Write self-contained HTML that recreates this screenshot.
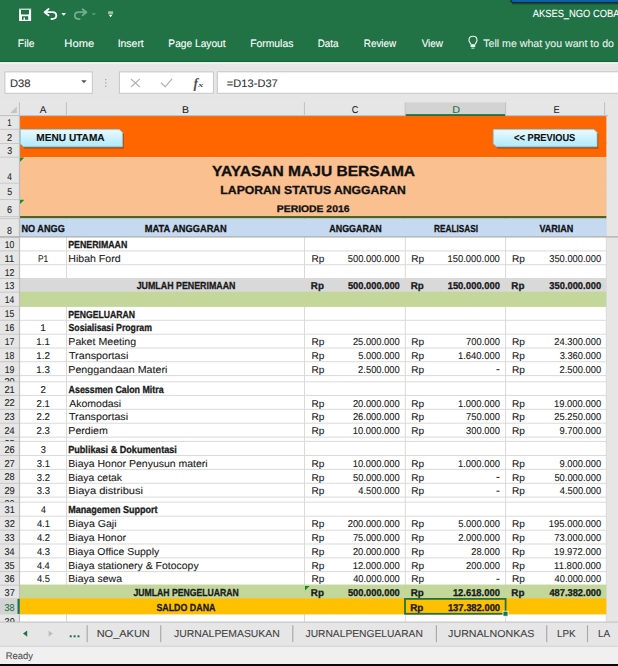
<!DOCTYPE html>
<html><head><meta charset="utf-8"><style>
html,body{margin:0;padding:0;width:618px;height:666px;overflow:hidden;background:#fff}
text{white-space:pre;text-rendering:geometricPrecision}
</style></head><body>
<svg width="618" height="666" viewBox="0 0 618 666" style="display:block">
<defs>
<linearGradient id="btn" x1="0" y1="0" x2="0" y2="1"><stop offset="0" stop-color="#ebfaff"/><stop offset="1" stop-color="#aee9fa"/></linearGradient>
<linearGradient id="shd" x1="0" y1="0" x2="0" y2="1"><stop offset="0" stop-color="#000" stop-opacity="0.55"/><stop offset="1" stop-color="#000" stop-opacity="0"/></linearGradient>
</defs>
<rect x="0" y="0" width="618" height="62" fill="#217346" />
<rect x="512" y="2.6" width="110" height="2.6" fill="url(#shd)" />
<rect x="510.4" y="-8" width="120" height="11" fill="#0b1a10"  rx="3"/>
<rect x="511.2" y="-8" width="118" height="10.2" fill="#0d5fa8"  rx="2.5"/>
<path fill-rule="evenodd" fill="#fff" d="M19.1 8.8 H31.1 V20.9 H19.1 Z M21.0 9.9 H29.0 V13.8 Q29.0 14.6 28.2 14.6 H21.8 Q21.0 14.6 21.0 13.8 Z M22.0 16.3 H28.2 V19.7 H25.0 V17.6 H23.6 V19.7 H22.0 Z"/>
<rect x="19.1" y="8.8" width="12.0" height="1.1" fill="#b9d5c4" />
<path d="M44.6 12.2 L48.6 9.0 M44.6 12.2 L48.6 15.4 M44.6 12.2 H52.6 C55.0 12.2 56.3 14.0 56.3 15.8 C56.3 17.6 54.6 19.0 51.4 19.0" fill="none" stroke="#fff" stroke-width="1.8" stroke-linecap="round" stroke-linejoin="round"/>
<path d="M61.3 13.1 H66.1 L63.7 15.8 Z" fill="#fff"/>
<path d="M86.4 12.2 L82.6 9.2 M86.4 12.2 L82.6 15.2 M86.4 12.2 H78.6 C76.0 12.2 74.8 14.0 74.8 15.6 C74.8 17.6 76.6 19.2 79.6 19.2" fill="none" stroke="#6fae8c" stroke-width="1.8" stroke-linecap="round" stroke-linejoin="round"/>
<path d="M91.6 13.2 H96.1 L93.85 15.2 Z" fill="#5f9f7d"/>
<rect x="108.1" y="11.6" width="5.0" height="1.0" fill="#fff" />
<path d="M107.9 13.6 H113.3 L110.6 17.3 Z" fill="#fff"/>
<rect x="108.1" y="14.2" width="5.0" height="0.7" fill="#217346" />
<text x="532.68" y="17.10" font-family='"Liberation Sans", sans-serif' font-size="10.47" font-weight="normal" font-style="normal" fill="#ffffff" stroke="#ffffff" stroke-width="0.1" textLength="86.83" lengthAdjust="spacingAndGlyphs" >AKSES_NGO COBA</text>
<text x="17.85" y="46.70" font-family='"Liberation Sans", sans-serif' font-size="10.76" font-weight="normal" font-style="normal" fill="#ffffff" stroke="#ffffff" stroke-width="0.1" textLength="16.60" lengthAdjust="spacingAndGlyphs" >File</text>
<text x="64.38" y="46.70" font-family='"Liberation Sans", sans-serif' font-size="10.76" font-weight="normal" font-style="normal" fill="#ffffff" stroke="#ffffff" stroke-width="0.1" textLength="29.80" lengthAdjust="spacingAndGlyphs" >Home</text>
<text x="117.63" y="46.70" font-family='"Liberation Sans", sans-serif' font-size="10.76" font-weight="normal" font-style="normal" fill="#ffffff" stroke="#ffffff" stroke-width="0.1" textLength="26.16" lengthAdjust="spacingAndGlyphs" >Insert</text>
<text x="168.36" y="46.70" font-family='"Liberation Sans", sans-serif' font-size="10.76" font-weight="normal" font-style="normal" fill="#ffffff" stroke="#ffffff" stroke-width="0.1" textLength="57.23" lengthAdjust="spacingAndGlyphs" >Page Layout</text>
<text x="250.14" y="46.70" font-family='"Liberation Sans", sans-serif' font-size="10.76" font-weight="normal" font-style="normal" fill="#ffffff" stroke="#ffffff" stroke-width="0.1" textLength="43.22" lengthAdjust="spacingAndGlyphs" >Formulas</text>
<text x="317.68" y="46.70" font-family='"Liberation Sans", sans-serif' font-size="10.76" font-weight="normal" font-style="normal" fill="#ffffff" stroke="#ffffff" stroke-width="0.1" textLength="20.92" lengthAdjust="spacingAndGlyphs" >Data</text>
<text x="363.79" y="46.70" font-family='"Liberation Sans", sans-serif' font-size="10.76" font-weight="normal" font-style="normal" fill="#ffffff" stroke="#ffffff" stroke-width="0.1" textLength="32.38" lengthAdjust="spacingAndGlyphs" >Review</text>
<text x="421.65" y="46.70" font-family='"Liberation Sans", sans-serif' font-size="10.76" font-weight="normal" font-style="normal" fill="#ffffff" stroke="#ffffff" stroke-width="0.1" textLength="21.32" lengthAdjust="spacingAndGlyphs" >View</text>
<text x="483.26" y="46.70" font-family='"Liberation Sans", sans-serif' font-size="10.76" font-weight="normal" font-style="normal" fill="#e8f1ec" stroke="#e8f1ec" stroke-width="0.1" textLength="130.67" lengthAdjust="spacingAndGlyphs" >Tell me what you want to do</text>
<path d="M470.9 44.4 C470.5 43.0 469.0 42.2 469.0 40.2 C469.0 37.9 470.8 36.3 473.0 36.3 C475.2 36.3 477.0 37.9 477.0 40.2 C477.0 42.2 475.5 43.0 475.1 44.4" fill="none" stroke="#eef5f0" stroke-width="1.1"/>
<rect x="470.6" y="44.2" width="4.6" height="2.8" fill="#eef5f0" />
<rect x="471.4" y="47.7" width="3.0" height="0.9" fill="#eef5f0" />
<rect x="0" y="62" width="618" height="40" fill="#e6e6e6" />
<rect x="0" y="60.6" width="618" height="1.3" fill="#146b38" />
<rect x="0" y="62.8" width="618" height="1.3" fill="#f3eff3" />
<rect x="4.9" y="71.9" width="87.4" height="21.4" fill="#fff" stroke="#c6c6c6" stroke-width="1"/>
<text x="9.97" y="86.70" font-family='"Liberation Sans", sans-serif' font-size="10.91" font-weight="normal" font-style="normal" fill="#333" stroke="#333" stroke-width="0.1" textLength="20.63" lengthAdjust="spacingAndGlyphs" >D38</text>
<path d="M81.2 80.2 H86.6 L83.9 83.2 Z" fill="#555"/>
<rect x="105.2" y="79.0" width="1.2" height="1.2" fill="#9a9a9a" />
<rect x="105.2" y="82.3" width="1.2" height="1.2" fill="#9a9a9a" />
<rect x="105.2" y="85.6" width="1.2" height="1.2" fill="#9a9a9a" />
<rect x="119.4" y="71.9" width="94" height="21.4" fill="#fff" stroke="#c6c6c6" stroke-width="1"/>
<path d="M131 79.0 L139.8 87.0 M139.8 79.0 L131 87.0" stroke="#b4b4b4" stroke-width="1.1"/>
<path d="M161.0 82.8 L165.2 86.8 L172.2 78.6" fill="none" stroke="#b4b4b4" stroke-width="1.3"/>
<text x="193.40" y="87.60" font-family='"Liberation Serif", serif' font-size="14.25" font-weight="bold" font-style="italic" fill="#505050" textLength="4.49" lengthAdjust="spacingAndGlyphs" >f</text>
<text x="197.94" y="86.60" font-family='"Liberation Serif", serif' font-size="6.40" font-weight="bold" font-style="italic" fill="#505050" textLength="5.44" lengthAdjust="spacingAndGlyphs" >x</text>
<rect x="217.3" y="71.8" width="410" height="21.5" fill="#fff" stroke="#c6c6c6" stroke-width="1"/>
<text x="226.87" y="86.80" font-family='"Liberation Sans", sans-serif' font-size="10.91" font-weight="normal" font-style="normal" fill="#333" stroke="#333" stroke-width="0.1" textLength="50.89" lengthAdjust="spacingAndGlyphs" >=D13-D37</text>
<rect x="0" y="102.3" width="618" height="519.7" fill="#e6e6e6" />
<rect x="19.5" y="115.3" width="586.8" height="506.7" fill="#ffffff" />
<rect x="606.3" y="115.3" width="2" height="506.7" fill="#e3e7ea" />
<rect x="19.5" y="250.40" width="586.8" height="1" fill="#dadada"/>
<rect x="19.5" y="264.20" width="586.8" height="1" fill="#dadada"/>
<rect x="19.5" y="278.00" width="586.8" height="1" fill="#dadada"/>
<rect x="19.5" y="291.70" width="586.8" height="1" fill="#dadada"/>
<rect x="19.5" y="305.80" width="586.8" height="1" fill="#dadada"/>
<rect x="19.5" y="319.80" width="586.8" height="1" fill="#dadada"/>
<rect x="19.5" y="333.70" width="586.8" height="1" fill="#dadada"/>
<rect x="19.5" y="347.50" width="586.8" height="1" fill="#dadada"/>
<rect x="19.5" y="361.20" width="586.8" height="1" fill="#dadada"/>
<rect x="19.5" y="375.10" width="586.8" height="1" fill="#dadada"/>
<rect x="19.5" y="381.30" width="586.8" height="1" fill="#dadada"/>
<rect x="19.5" y="394.90" width="586.8" height="1" fill="#dadada"/>
<rect x="19.5" y="408.80" width="586.8" height="1" fill="#dadada"/>
<rect x="19.5" y="422.70" width="586.8" height="1" fill="#dadada"/>
<rect x="19.5" y="436.60" width="586.8" height="1" fill="#dadada"/>
<rect x="19.5" y="440.90" width="586.8" height="1" fill="#dadada"/>
<rect x="19.5" y="455.00" width="586.8" height="1" fill="#dadada"/>
<rect x="19.5" y="468.90" width="586.8" height="1" fill="#dadada"/>
<rect x="19.5" y="482.80" width="586.8" height="1" fill="#dadada"/>
<rect x="19.5" y="496.60" width="586.8" height="1" fill="#dadada"/>
<rect x="19.5" y="501.70" width="586.8" height="1" fill="#dadada"/>
<rect x="19.5" y="515.70" width="586.8" height="1" fill="#dadada"/>
<rect x="19.5" y="529.70" width="586.8" height="1" fill="#dadada"/>
<rect x="19.5" y="543.50" width="586.8" height="1" fill="#dadada"/>
<rect x="19.5" y="557.40" width="586.8" height="1" fill="#dadada"/>
<rect x="19.5" y="571.10" width="586.8" height="1" fill="#dadada"/>
<rect x="19.5" y="584.70" width="586.8" height="1" fill="#dadada"/>
<rect x="19.5" y="598.40" width="586.8" height="1" fill="#dadada"/>
<rect x="19.5" y="613.30" width="586.8" height="1" fill="#dadada"/>
<rect x="66.00" y="115.3" width="1" height="506.7" fill="#dadada"/>
<rect x="304.00" y="115.3" width="1" height="506.7" fill="#dadada"/>
<rect x="404.80" y="115.3" width="1" height="506.7" fill="#dadada"/>
<rect x="505.10" y="115.3" width="1" height="506.7" fill="#dadada"/>
<rect x="605.80" y="115.3" width="1" height="506.7" fill="#dadada"/>
<rect x="19.50" y="115.30" width="586.80" height="14.50" fill="#ff6600" />
<rect x="19.50" y="128.80" width="586.80" height="15.20" fill="#ff6600" />
<rect x="19.50" y="143.00" width="586.80" height="14.20" fill="#ff6600" />
<rect x="19.50" y="157.20" width="586.80" height="26.50" fill="#fac090" />
<rect x="19.50" y="182.70" width="586.80" height="17.30" fill="#fac090" />
<rect x="19.50" y="199.00" width="586.80" height="17.60" fill="#fac090" />
<rect x="19.5" y="216.0" width="586.8" height="2.4" fill="#4f6228" />
<rect x="19.50" y="218.80" width="586.80" height="18.00" fill="#c5d9f1" />
<rect x="19.50" y="278.00" width="586.80" height="14.70" fill="#d9d9d9" />
<rect x="19.50" y="291.70" width="586.80" height="15.10" fill="#c4d79b" />
<rect x="19.50" y="584.70" width="586.80" height="14.70" fill="#c4d79b" />
<rect x="19.50" y="598.40" width="586.80" height="15.90" fill="#ffc000" />
<path d="M19.8 157.5 H24.3 L19.8 162.0 Z" fill="#0e8a1c"/>
<path d="M19.8 199.8 H24.3 L19.8 204.3 Z" fill="#0e8a1c"/>
<path d="M305.0 586.0 H309.6 L305.0 590.6 Z" fill="#0e8a1c"/>
<rect x="0" y="115.3" width="19.5" height="506.7" fill="#e6e6e6" />
<rect x="0" y="128.80" width="19.5" height="1" fill="#c9c9c9"/>
<rect x="0" y="143.00" width="19.5" height="1" fill="#c9c9c9"/>
<rect x="0" y="156.70" width="19.5" height="1" fill="#c9c9c9"/>
<rect x="0" y="182.70" width="19.5" height="1" fill="#c9c9c9"/>
<rect x="0" y="199.00" width="19.5" height="1" fill="#c9c9c9"/>
<rect x="0" y="216.10" width="19.5" height="1" fill="#c9c9c9"/>
<rect x="0" y="218.10" width="19.5" height="1" fill="#c9c9c9"/>
<rect x="0" y="236.30" width="19.5" height="1" fill="#c9c9c9"/>
<rect x="0" y="237.10" width="19.5" height="1" fill="#c9c9c9"/>
<rect x="0" y="250.40" width="19.5" height="1" fill="#c9c9c9"/>
<rect x="0" y="264.20" width="19.5" height="1" fill="#c9c9c9"/>
<rect x="0" y="278.00" width="19.5" height="1" fill="#c9c9c9"/>
<rect x="0" y="291.70" width="19.5" height="1" fill="#c9c9c9"/>
<rect x="0" y="305.80" width="19.5" height="1" fill="#c9c9c9"/>
<rect x="0" y="319.80" width="19.5" height="1" fill="#c9c9c9"/>
<rect x="0" y="333.70" width="19.5" height="1" fill="#c9c9c9"/>
<rect x="0" y="347.50" width="19.5" height="1" fill="#c9c9c9"/>
<rect x="0" y="361.20" width="19.5" height="1" fill="#c9c9c9"/>
<rect x="0" y="375.10" width="19.5" height="1" fill="#c9c9c9"/>
<rect x="0" y="381.30" width="19.5" height="1" fill="#c9c9c9"/>
<rect x="0" y="394.90" width="19.5" height="1" fill="#c9c9c9"/>
<rect x="0" y="408.80" width="19.5" height="1" fill="#c9c9c9"/>
<rect x="0" y="422.70" width="19.5" height="1" fill="#c9c9c9"/>
<rect x="0" y="436.60" width="19.5" height="1" fill="#c9c9c9"/>
<rect x="0" y="440.90" width="19.5" height="1" fill="#c9c9c9"/>
<rect x="0" y="455.00" width="19.5" height="1" fill="#c9c9c9"/>
<rect x="0" y="468.90" width="19.5" height="1" fill="#c9c9c9"/>
<rect x="0" y="482.80" width="19.5" height="1" fill="#c9c9c9"/>
<rect x="0" y="496.60" width="19.5" height="1" fill="#c9c9c9"/>
<rect x="0" y="501.70" width="19.5" height="1" fill="#c9c9c9"/>
<rect x="0" y="515.70" width="19.5" height="1" fill="#c9c9c9"/>
<rect x="0" y="529.70" width="19.5" height="1" fill="#c9c9c9"/>
<rect x="0" y="543.50" width="19.5" height="1" fill="#c9c9c9"/>
<rect x="0" y="557.40" width="19.5" height="1" fill="#c9c9c9"/>
<rect x="0" y="571.10" width="19.5" height="1" fill="#c9c9c9"/>
<rect x="0" y="584.70" width="19.5" height="1" fill="#c9c9c9"/>
<rect x="0" y="598.40" width="19.5" height="1" fill="#c9c9c9"/>
<rect x="0" y="613.30" width="19.5" height="1" fill="#c9c9c9"/>
<rect x="0" y="599.40" width="18.0" height="13.90" fill="#d3d3d3" />
<rect x="17.7" y="598.90" width="2.0" height="14.90" fill="#217346" />
<rect x="18.9" y="115.3" width="1.2" height="506.7" fill="#bdbdbd" />
<rect x="17.7" y="598.90" width="2.0" height="14.90" fill="#217346" />
<rect x="0" y="102.3" width="618" height="13.0" fill="#e6e6e6" />
<rect x="405.8" y="102.3" width="99.80000000000001" height="11.8" fill="#d3d3d3" />
<rect x="405.3" y="114.1" width="100.30000000000001" height="1.9" fill="#217346" />
<rect x="18.90" y="102.3" width="1.1" height="13.0" fill="#c3c3c3"/>
<rect x="65.90" y="102.3" width="1.1" height="13.0" fill="#c3c3c3"/>
<rect x="303.90" y="102.3" width="1.1" height="13.0" fill="#c3c3c3"/>
<rect x="404.70" y="102.3" width="1.1" height="13.0" fill="#c3c3c3"/>
<rect x="505.00" y="102.3" width="1.1" height="13.0" fill="#c3c3c3"/>
<rect x="604.00" y="102.3" width="1.1" height="13.0" fill="#c3c3c3"/>
<rect x="0" y="115.0" width="405.3" height="1.1" fill="#b9c4cc" />
<rect x="505.6" y="115.0" width="102.39999999999998" height="1.1" fill="#b9c4cc" />
<path d="M10.2 113.0 L16.8 106.6 L16.8 113.0 Z" fill="#c2c2c2"/>
<text x="39.88" y="112.80" font-family='"Liberation Sans", sans-serif' font-size="9.89" font-weight="normal" font-style="normal" fill="#262626" stroke="#262626" stroke-width="0.1" textLength="6.64" lengthAdjust="spacingAndGlyphs" >A</text>
<text x="182.03" y="112.80" font-family='"Liberation Sans", sans-serif' font-size="9.89" font-weight="normal" font-style="normal" fill="#262626" stroke="#262626" stroke-width="0.1" textLength="7.01" lengthAdjust="spacingAndGlyphs" >B</text>
<text x="351.74" y="112.80" font-family='"Liberation Sans", sans-serif' font-size="9.89" font-weight="normal" font-style="normal" fill="#262626" stroke="#262626" stroke-width="0.1" textLength="6.60" lengthAdjust="spacingAndGlyphs" >C</text>
<text x="452.26" y="112.80" font-family='"Liberation Sans", sans-serif' font-size="9.89" font-weight="normal" font-style="normal" fill="#217346" stroke="#217346" stroke-width="0.1" textLength="7.80" lengthAdjust="spacingAndGlyphs" >D</text>
<text x="553.59" y="112.80" font-family='"Liberation Sans", sans-serif' font-size="9.89" font-weight="normal" font-style="normal" fill="#262626" stroke="#262626" stroke-width="0.1" textLength="6.15" lengthAdjust="spacingAndGlyphs" >E</text>
<text x="7.31" y="126.40" font-family='"Liberation Sans", sans-serif' font-size="9.89" font-weight="normal" font-style="normal" fill="#262626" stroke="#262626" stroke-width="0.1" textLength="4.37" lengthAdjust="spacingAndGlyphs" >1</text>
<text x="7.04" y="140.60" font-family='"Liberation Sans", sans-serif' font-size="9.89" font-weight="normal" font-style="normal" fill="#262626" stroke="#262626" stroke-width="0.1" textLength="5.13" lengthAdjust="spacingAndGlyphs" >2</text>
<text x="7.17" y="154.30" font-family='"Liberation Sans", sans-serif' font-size="9.89" font-weight="normal" font-style="normal" fill="#262626" stroke="#262626" stroke-width="0.1" textLength="4.92" lengthAdjust="spacingAndGlyphs" >3</text>
<text x="7.31" y="179.90" font-family='"Liberation Sans", sans-serif' font-size="9.89" font-weight="normal" font-style="normal" fill="#262626" stroke="#262626" stroke-width="0.1" textLength="4.63" lengthAdjust="spacingAndGlyphs" >4</text>
<text x="7.15" y="195.10" font-family='"Liberation Sans", sans-serif' font-size="9.89" font-weight="normal" font-style="normal" fill="#262626" stroke="#262626" stroke-width="0.1" textLength="4.92" lengthAdjust="spacingAndGlyphs" >5</text>
<text x="7.05" y="213.20" font-family='"Liberation Sans", sans-serif' font-size="9.89" font-weight="normal" font-style="normal" fill="#262626" stroke="#262626" stroke-width="0.1" textLength="5.05" lengthAdjust="spacingAndGlyphs" >6</text>
<text x="7.12" y="233.90" font-family='"Liberation Sans", sans-serif' font-size="9.89" font-weight="normal" font-style="normal" fill="#262626" stroke="#262626" stroke-width="0.1" textLength="4.97" lengthAdjust="spacingAndGlyphs" >8</text>
<text x="4.65" y="248.00" font-family='"Liberation Sans", sans-serif' font-size="9.89" font-weight="normal" font-style="normal" fill="#262626" stroke="#262626" stroke-width="0.1" textLength="9.59" lengthAdjust="spacingAndGlyphs" >10</text>
<text x="4.60" y="261.80" font-family='"Liberation Sans", sans-serif' font-size="9.89" font-weight="normal" font-style="normal" fill="#262626" stroke="#262626" stroke-width="0.1" textLength="9.76" lengthAdjust="spacingAndGlyphs" >11</text>
<text x="4.65" y="275.60" font-family='"Liberation Sans", sans-serif' font-size="9.89" font-weight="normal" font-style="normal" fill="#262626" stroke="#262626" stroke-width="0.1" textLength="9.71" lengthAdjust="spacingAndGlyphs" >12</text>
<text x="4.65" y="289.30" font-family='"Liberation Sans", sans-serif' font-size="9.89" font-weight="normal" font-style="normal" fill="#262626" stroke="#262626" stroke-width="0.1" textLength="9.64" lengthAdjust="spacingAndGlyphs" >13</text>
<text x="4.66" y="303.40" font-family='"Liberation Sans", sans-serif' font-size="9.89" font-weight="normal" font-style="normal" fill="#262626" stroke="#262626" stroke-width="0.1" textLength="9.49" lengthAdjust="spacingAndGlyphs" >14</text>
<text x="4.65" y="317.40" font-family='"Liberation Sans", sans-serif' font-size="9.89" font-weight="normal" font-style="normal" fill="#262626" stroke="#262626" stroke-width="0.1" textLength="9.61" lengthAdjust="spacingAndGlyphs" >15</text>
<text x="4.65" y="331.30" font-family='"Liberation Sans", sans-serif' font-size="9.89" font-weight="normal" font-style="normal" fill="#262626" stroke="#262626" stroke-width="0.1" textLength="9.64" lengthAdjust="spacingAndGlyphs" >16</text>
<text x="4.65" y="345.10" font-family='"Liberation Sans", sans-serif' font-size="9.89" font-weight="normal" font-style="normal" fill="#262626" stroke="#262626" stroke-width="0.1" textLength="9.71" lengthAdjust="spacingAndGlyphs" >17</text>
<text x="4.65" y="358.80" font-family='"Liberation Sans", sans-serif' font-size="9.89" font-weight="normal" font-style="normal" fill="#262626" stroke="#262626" stroke-width="0.1" textLength="9.64" lengthAdjust="spacingAndGlyphs" >18</text>
<text x="4.65" y="372.70" font-family='"Liberation Sans", sans-serif' font-size="9.89" font-weight="normal" font-style="normal" fill="#262626" stroke="#262626" stroke-width="0.1" textLength="9.66" lengthAdjust="spacingAndGlyphs" >19</text>
<clipPath id="cl20"><rect x="0" y="376.10" width="19.5" height="5.20"/></clipPath>
<g clip-path="url(#cl20)">
<text x="4.44" y="385.20" font-family='"Liberation Sans", sans-serif' font-size="9.89" font-weight="normal" font-style="normal" fill="#262626" stroke="#262626" stroke-width="0.1" textLength="10.23" lengthAdjust="spacingAndGlyphs" >20</text>
</g>
<text x="4.44" y="392.50" font-family='"Liberation Sans", sans-serif' font-size="9.89" font-weight="normal" font-style="normal" fill="#262626" stroke="#262626" stroke-width="0.1" textLength="10.33" lengthAdjust="spacingAndGlyphs" >21</text>
<text x="4.43" y="406.40" font-family='"Liberation Sans", sans-serif' font-size="9.89" font-weight="normal" font-style="normal" fill="#262626" stroke="#262626" stroke-width="0.1" textLength="10.35" lengthAdjust="spacingAndGlyphs" >22</text>
<text x="4.44" y="420.30" font-family='"Liberation Sans", sans-serif' font-size="9.89" font-weight="normal" font-style="normal" fill="#262626" stroke="#262626" stroke-width="0.1" textLength="10.28" lengthAdjust="spacingAndGlyphs" >23</text>
<text x="4.44" y="434.20" font-family='"Liberation Sans", sans-serif' font-size="9.89" font-weight="normal" font-style="normal" fill="#262626" stroke="#262626" stroke-width="0.1" textLength="10.13" lengthAdjust="spacingAndGlyphs" >24</text>
<clipPath id="cl25"><rect x="0" y="437.60" width="19.5" height="3.30"/></clipPath>
<g clip-path="url(#cl25)">
<text x="4.44" y="446.70" font-family='"Liberation Sans", sans-serif' font-size="9.89" font-weight="normal" font-style="normal" fill="#262626" stroke="#262626" stroke-width="0.1" textLength="10.25" lengthAdjust="spacingAndGlyphs" >25</text>
</g>
<text x="4.44" y="452.60" font-family='"Liberation Sans", sans-serif' font-size="9.89" font-weight="normal" font-style="normal" fill="#262626" stroke="#262626" stroke-width="0.1" textLength="10.28" lengthAdjust="spacingAndGlyphs" >26</text>
<text x="4.43" y="466.50" font-family='"Liberation Sans", sans-serif' font-size="9.89" font-weight="normal" font-style="normal" fill="#262626" stroke="#262626" stroke-width="0.1" textLength="10.35" lengthAdjust="spacingAndGlyphs" >27</text>
<text x="4.44" y="480.40" font-family='"Liberation Sans", sans-serif' font-size="9.89" font-weight="normal" font-style="normal" fill="#262626" stroke="#262626" stroke-width="0.1" textLength="10.28" lengthAdjust="spacingAndGlyphs" >28</text>
<text x="4.44" y="494.20" font-family='"Liberation Sans", sans-serif' font-size="9.89" font-weight="normal" font-style="normal" fill="#262626" stroke="#262626" stroke-width="0.1" textLength="10.30" lengthAdjust="spacingAndGlyphs" >29</text>
<clipPath id="cl30"><rect x="0" y="497.60" width="19.5" height="4.10"/></clipPath>
<g clip-path="url(#cl30)">
<text x="4.56" y="506.70" font-family='"Liberation Sans", sans-serif' font-size="9.89" font-weight="normal" font-style="normal" fill="#262626" stroke="#262626" stroke-width="0.1" textLength="10.10" lengthAdjust="spacingAndGlyphs" >30</text>
</g>
<text x="4.56" y="513.30" font-family='"Liberation Sans", sans-serif' font-size="9.89" font-weight="normal" font-style="normal" fill="#262626" stroke="#262626" stroke-width="0.1" textLength="10.20" lengthAdjust="spacingAndGlyphs" >31</text>
<text x="4.56" y="527.30" font-family='"Liberation Sans", sans-serif' font-size="9.89" font-weight="normal" font-style="normal" fill="#262626" stroke="#262626" stroke-width="0.1" textLength="10.23" lengthAdjust="spacingAndGlyphs" >32</text>
<text x="4.56" y="541.10" font-family='"Liberation Sans", sans-serif' font-size="9.89" font-weight="normal" font-style="normal" fill="#262626" stroke="#262626" stroke-width="0.1" textLength="10.15" lengthAdjust="spacingAndGlyphs" >33</text>
<text x="4.56" y="555.00" font-family='"Liberation Sans", sans-serif' font-size="9.89" font-weight="normal" font-style="normal" fill="#262626" stroke="#262626" stroke-width="0.1" textLength="10.01" lengthAdjust="spacingAndGlyphs" >34</text>
<text x="4.56" y="568.70" font-family='"Liberation Sans", sans-serif' font-size="9.89" font-weight="normal" font-style="normal" fill="#262626" stroke="#262626" stroke-width="0.1" textLength="10.13" lengthAdjust="spacingAndGlyphs" >35</text>
<text x="4.56" y="582.30" font-family='"Liberation Sans", sans-serif' font-size="9.89" font-weight="normal" font-style="normal" fill="#262626" stroke="#262626" stroke-width="0.1" textLength="10.15" lengthAdjust="spacingAndGlyphs" >36</text>
<text x="4.56" y="596.00" font-family='"Liberation Sans", sans-serif' font-size="9.89" font-weight="normal" font-style="normal" fill="#262626" stroke="#262626" stroke-width="0.1" textLength="10.23" lengthAdjust="spacingAndGlyphs" >37</text>
<text x="4.56" y="610.90" font-family='"Liberation Sans", sans-serif' font-size="9.89" font-weight="normal" font-style="normal" fill="#217346" stroke="#217346" stroke-width="0.1" textLength="10.15" lengthAdjust="spacingAndGlyphs" >38</text>
<clipPath id="cl39"><rect x="0" y="614.30" width="19.5" height="7.70"/></clipPath>
<g clip-path="url(#cl39)">
<text x="4.56" y="624.70" font-family='"Liberation Sans", sans-serif' font-size="9.89" font-weight="normal" font-style="normal" fill="#262626" stroke="#262626" stroke-width="0.1" textLength="10.18" lengthAdjust="spacingAndGlyphs" >39</text>
</g>
<rect x="0" y="236.1" width="618" height="1.5" fill="#b6b6b6" />
<path d="M21.599999999999998 131.2 H120.60000000000001 L123.60000000000001 134.2 V148.4 H24.599999999999998 L21.599999999999998 145.4 Z" fill="#6a2400" opacity="0.6"/>
<path d="M20.4 129.6 H119.4 L122.4 132.6 V146.8 H23.4 L20.4 143.8 Z" fill="url(#btn)" stroke="#7fd6ee" stroke-width="0.9"/>
<text x="36.32" y="141.20" font-family='"Liberation Sans", sans-serif' font-size="10.04" font-weight="bold" font-style="normal" fill="#111" stroke="#111" stroke-width="0.12" textLength="68.34" lengthAdjust="spacingAndGlyphs" >MENU UTAMA</text>
<path d="M494.59999999999997 131.2 H595.2 L598.2 134.2 V148.4 H497.59999999999997 L494.59999999999997 145.4 Z" fill="#6a2400" opacity="0.6"/>
<path d="M493.4 129.6 H594.0 L597.0 132.6 V146.8 H496.4 L493.4 143.8 Z" fill="url(#btn)" stroke="#7fd6ee" stroke-width="0.9"/>
<text x="514.11" y="141.30" font-family='"Liberation Sans", sans-serif' font-size="10.04" font-weight="bold" font-style="normal" fill="#111" stroke="#111" stroke-width="0.12" textLength="61.15" lengthAdjust="spacingAndGlyphs" >&lt;&lt; PREVIOUS</text>
<text x="212.03" y="175.50" font-family='"Liberation Sans", sans-serif' font-size="14.55" font-weight="bold" font-style="normal" fill="#111" stroke="#111" stroke-width="0.3" textLength="203.09" lengthAdjust="spacingAndGlyphs" >YAYASAN MAJU BERSAMA</text>
<text x="220.38" y="194.40" font-family='"Liberation Sans", sans-serif' font-size="11.64" font-weight="bold" font-style="normal" fill="#111" stroke="#111" stroke-width="0.3" textLength="185.43" lengthAdjust="spacingAndGlyphs" >LAPORAN STATUS ANGGARAN</text>
<text x="276.80" y="211.90" font-family='"Liberation Sans", sans-serif' font-size="9.60" font-weight="bold" font-style="normal" fill="#111" stroke="#111" stroke-width="0.3" textLength="72.67" lengthAdjust="spacingAndGlyphs" >PERIODE 2016</text>
<text x="21.48" y="231.70" font-family='"Liberation Sans", sans-serif' font-size="10.18" font-weight="bold" font-style="normal" fill="#111" stroke="#111" stroke-width="0.3" textLength="43.30" lengthAdjust="spacingAndGlyphs" >NO ANGG</text>
<text x="144.87" y="231.70" font-family='"Liberation Sans", sans-serif' font-size="10.18" font-weight="bold" font-style="normal" fill="#111" stroke="#111" stroke-width="0.3" textLength="81.85" lengthAdjust="spacingAndGlyphs" >MATA ANGGARAN</text>
<text x="329.28" y="231.70" font-family='"Liberation Sans", sans-serif' font-size="10.18" font-weight="bold" font-style="normal" fill="#111" stroke="#111" stroke-width="0.3" textLength="52.51" lengthAdjust="spacingAndGlyphs" >ANGGARAN</text>
<text x="434.04" y="231.70" font-family='"Liberation Sans", sans-serif' font-size="10.18" font-weight="bold" font-style="normal" fill="#111" stroke="#111" stroke-width="0.3" textLength="43.90" lengthAdjust="spacingAndGlyphs" >REALISASI</text>
<text x="539.43" y="231.70" font-family='"Liberation Sans", sans-serif' font-size="10.18" font-weight="bold" font-style="normal" fill="#111" stroke="#111" stroke-width="0.3" textLength="33.87" lengthAdjust="spacingAndGlyphs" >VARIAN</text>
<text x="68.21" y="248.10" font-family='"Liberation Sans", sans-serif' font-size="10.18" font-weight="bold" font-style="normal" fill="#1a1a1a" stroke="#1a1a1a" stroke-width="0.3" textLength="59.09" lengthAdjust="spacingAndGlyphs" >PENERIMAAN</text>
<text x="68.33" y="261.90" font-family='"Liberation Sans", sans-serif' font-size="10.04" font-weight="normal" font-style="normal" fill="#1a1a1a" stroke="#1a1a1a" stroke-width="0.1" textLength="52.25" lengthAdjust="spacingAndGlyphs" >Hibah Ford</text>
<text x="68.22" y="317.50" font-family='"Liberation Sans", sans-serif' font-size="10.18" font-weight="bold" font-style="normal" fill="#1a1a1a" stroke="#1a1a1a" stroke-width="0.3" textLength="66.77" lengthAdjust="spacingAndGlyphs" >PENGELUARAN</text>
<text x="68.54" y="331.40" font-family='"Liberation Sans", sans-serif' font-size="10.18" font-weight="bold" font-style="normal" fill="#1a1a1a" stroke="#1a1a1a" stroke-width="0.3" textLength="83.41" lengthAdjust="spacingAndGlyphs" >Sosialisasi Program</text>
<text x="68.32" y="345.20" font-family='"Liberation Sans", sans-serif' font-size="10.04" font-weight="normal" font-style="normal" fill="#1a1a1a" stroke="#1a1a1a" stroke-width="0.1" textLength="67.84" lengthAdjust="spacingAndGlyphs" >Paket Meeting</text>
<text x="68.96" y="358.90" font-family='"Liberation Sans", sans-serif' font-size="10.04" font-weight="normal" font-style="normal" fill="#1a1a1a" stroke="#1a1a1a" stroke-width="0.1" textLength="59.38" lengthAdjust="spacingAndGlyphs" >Transportasi</text>
<text x="68.32" y="372.80" font-family='"Liberation Sans", sans-serif' font-size="10.04" font-weight="normal" font-style="normal" fill="#1a1a1a" stroke="#1a1a1a" stroke-width="0.1" textLength="99.00" lengthAdjust="spacingAndGlyphs" >Penggandaan Materi</text>
<text x="68.58" y="392.60" font-family='"Liberation Sans", sans-serif' font-size="10.18" font-weight="bold" font-style="normal" fill="#1a1a1a" stroke="#1a1a1a" stroke-width="0.3" textLength="95.06" lengthAdjust="spacingAndGlyphs" >Asessmen Calon Mitra</text>
<text x="69.17" y="406.50" font-family='"Liberation Sans", sans-serif' font-size="10.04" font-weight="normal" font-style="normal" fill="#1a1a1a" stroke="#1a1a1a" stroke-width="0.1" textLength="52.03" lengthAdjust="spacingAndGlyphs" >Akomodasi</text>
<text x="68.96" y="420.40" font-family='"Liberation Sans", sans-serif' font-size="10.04" font-weight="normal" font-style="normal" fill="#1a1a1a" stroke="#1a1a1a" stroke-width="0.1" textLength="59.17" lengthAdjust="spacingAndGlyphs" >Transportasi</text>
<text x="68.32" y="434.30" font-family='"Liberation Sans", sans-serif' font-size="10.04" font-weight="normal" font-style="normal" fill="#1a1a1a" stroke="#1a1a1a" stroke-width="0.1" textLength="39.58" lengthAdjust="spacingAndGlyphs" >Perdiem</text>
<text x="68.19" y="452.70" font-family='"Liberation Sans", sans-serif' font-size="10.18" font-weight="bold" font-style="normal" fill="#1a1a1a" stroke="#1a1a1a" stroke-width="0.3" textLength="108.66" lengthAdjust="spacingAndGlyphs" >Publikasi &amp; Dokumentasi</text>
<text x="68.33" y="466.60" font-family='"Liberation Sans", sans-serif' font-size="10.04" font-weight="normal" font-style="normal" fill="#1a1a1a" stroke="#1a1a1a" stroke-width="0.1" textLength="139.37" lengthAdjust="spacingAndGlyphs" >Biaya Honor Penyusun materi</text>
<text x="68.34" y="480.50" font-family='"Liberation Sans", sans-serif' font-size="10.04" font-weight="normal" font-style="normal" fill="#1a1a1a" stroke="#1a1a1a" stroke-width="0.1" textLength="53.65" lengthAdjust="spacingAndGlyphs" >Biaya cetak</text>
<text x="68.28" y="494.30" font-family='"Liberation Sans", sans-serif' font-size="10.04" font-weight="normal" font-style="normal" fill="#1a1a1a" stroke="#1a1a1a" stroke-width="0.1" textLength="74.77" lengthAdjust="spacingAndGlyphs" >Biaya distribusi</text>
<text x="68.19" y="513.40" font-family='"Liberation Sans", sans-serif' font-size="10.18" font-weight="bold" font-style="normal" fill="#1a1a1a" stroke="#1a1a1a" stroke-width="0.3" textLength="89.42" lengthAdjust="spacingAndGlyphs" >Managemen Support</text>
<text x="68.33" y="527.40" font-family='"Liberation Sans", sans-serif' font-size="10.04" font-weight="normal" font-style="normal" fill="#1a1a1a" stroke="#1a1a1a" stroke-width="0.1" textLength="48.19" lengthAdjust="spacingAndGlyphs" >Biaya Gaji</text>
<text x="68.34" y="541.20" font-family='"Liberation Sans", sans-serif' font-size="10.04" font-weight="normal" font-style="normal" fill="#1a1a1a" stroke="#1a1a1a" stroke-width="0.1" textLength="57.63" lengthAdjust="spacingAndGlyphs" >Biaya Honor</text>
<text x="68.34" y="555.10" font-family='"Liberation Sans", sans-serif' font-size="10.04" font-weight="normal" font-style="normal" fill="#1a1a1a" stroke="#1a1a1a" stroke-width="0.1" textLength="90.87" lengthAdjust="spacingAndGlyphs" >Biaya Office Supply</text>
<text x="68.34" y="568.80" font-family='"Liberation Sans", sans-serif' font-size="10.04" font-weight="normal" font-style="normal" fill="#1a1a1a" stroke="#1a1a1a" stroke-width="0.1" textLength="130.30" lengthAdjust="spacingAndGlyphs" >Biaya stationery &amp; Fotocopy</text>
<text x="68.33" y="582.40" font-family='"Liberation Sans", sans-serif' font-size="10.04" font-weight="normal" font-style="normal" fill="#1a1a1a" stroke="#1a1a1a" stroke-width="0.1" textLength="53.65" lengthAdjust="spacingAndGlyphs" >Biaya sewa</text>
<text x="38.06" y="261.90" font-family='"Liberation Sans", sans-serif' font-size="9.89" font-weight="normal" font-style="normal" fill="#1a1a1a" stroke="#1a1a1a" stroke-width="0.1" textLength="10.19" lengthAdjust="spacingAndGlyphs" >P1</text>
<text x="40.34" y="331.40" font-family='"Liberation Sans", sans-serif' font-size="9.89" font-weight="normal" font-style="normal" fill="#1a1a1a" stroke="#1a1a1a" stroke-width="0.1" textLength="5.66" lengthAdjust="spacingAndGlyphs" >1</text>
<text x="36.37" y="345.20" font-family='"Liberation Sans", sans-serif' font-size="9.89" font-weight="normal" font-style="normal" fill="#1a1a1a" stroke="#1a1a1a" stroke-width="0.1" textLength="13.60" lengthAdjust="spacingAndGlyphs" >1.1</text>
<text x="36.36" y="358.90" font-family='"Liberation Sans", sans-serif' font-size="9.89" font-weight="normal" font-style="normal" fill="#1a1a1a" stroke="#1a1a1a" stroke-width="0.1" textLength="13.63" lengthAdjust="spacingAndGlyphs" >1.2</text>
<text x="36.37" y="372.80" font-family='"Liberation Sans", sans-serif' font-size="9.89" font-weight="normal" font-style="normal" fill="#1a1a1a" stroke="#1a1a1a" stroke-width="0.1" textLength="13.55" lengthAdjust="spacingAndGlyphs" >1.3</text>
<text x="40.62" y="392.60" font-family='"Liberation Sans", sans-serif' font-size="9.89" font-weight="normal" font-style="normal" fill="#1a1a1a" stroke="#1a1a1a" stroke-width="0.1" textLength="5.38" lengthAdjust="spacingAndGlyphs" >2</text>
<text x="36.62" y="406.50" font-family='"Liberation Sans", sans-serif' font-size="9.89" font-weight="normal" font-style="normal" fill="#1a1a1a" stroke="#1a1a1a" stroke-width="0.1" textLength="13.34" lengthAdjust="spacingAndGlyphs" >2.1</text>
<text x="36.62" y="420.40" font-family='"Liberation Sans", sans-serif' font-size="9.89" font-weight="normal" font-style="normal" fill="#1a1a1a" stroke="#1a1a1a" stroke-width="0.1" textLength="13.36" lengthAdjust="spacingAndGlyphs" >2.2</text>
<text x="36.62" y="434.30" font-family='"Liberation Sans", sans-serif' font-size="9.89" font-weight="normal" font-style="normal" fill="#1a1a1a" stroke="#1a1a1a" stroke-width="0.1" textLength="13.29" lengthAdjust="spacingAndGlyphs" >2.3</text>
<text x="40.75" y="452.70" font-family='"Liberation Sans", sans-serif' font-size="9.89" font-weight="normal" font-style="normal" fill="#1a1a1a" stroke="#1a1a1a" stroke-width="0.1" textLength="5.15" lengthAdjust="spacingAndGlyphs" >3</text>
<text x="36.74" y="466.60" font-family='"Liberation Sans", sans-serif' font-size="9.89" font-weight="normal" font-style="normal" fill="#1a1a1a" stroke="#1a1a1a" stroke-width="0.1" textLength="13.21" lengthAdjust="spacingAndGlyphs" >3.1</text>
<text x="36.74" y="480.50" font-family='"Liberation Sans", sans-serif' font-size="9.89" font-weight="normal" font-style="normal" fill="#1a1a1a" stroke="#1a1a1a" stroke-width="0.1" textLength="13.23" lengthAdjust="spacingAndGlyphs" >3.2</text>
<text x="36.75" y="494.30" font-family='"Liberation Sans", sans-serif' font-size="9.89" font-weight="normal" font-style="normal" fill="#1a1a1a" stroke="#1a1a1a" stroke-width="0.1" textLength="13.16" lengthAdjust="spacingAndGlyphs" >3.3</text>
<text x="40.90" y="513.40" font-family='"Liberation Sans", sans-serif' font-size="9.89" font-weight="normal" font-style="normal" fill="#1a1a1a" stroke="#1a1a1a" stroke-width="0.1" textLength="4.85" lengthAdjust="spacingAndGlyphs" >4</text>
<text x="36.89" y="527.40" font-family='"Liberation Sans", sans-serif' font-size="9.89" font-weight="normal" font-style="normal" fill="#1a1a1a" stroke="#1a1a1a" stroke-width="0.1" textLength="13.06" lengthAdjust="spacingAndGlyphs" >4.1</text>
<text x="36.89" y="541.20" font-family='"Liberation Sans", sans-serif' font-size="9.89" font-weight="normal" font-style="normal" fill="#1a1a1a" stroke="#1a1a1a" stroke-width="0.1" textLength="13.08" lengthAdjust="spacingAndGlyphs" >4.2</text>
<text x="36.89" y="555.10" font-family='"Liberation Sans", sans-serif' font-size="9.89" font-weight="normal" font-style="normal" fill="#1a1a1a" stroke="#1a1a1a" stroke-width="0.1" textLength="13.01" lengthAdjust="spacingAndGlyphs" >4.3</text>
<text x="36.89" y="568.80" font-family='"Liberation Sans", sans-serif' font-size="9.89" font-weight="normal" font-style="normal" fill="#1a1a1a" stroke="#1a1a1a" stroke-width="0.1" textLength="12.86" lengthAdjust="spacingAndGlyphs" >4.4</text>
<text x="36.89" y="582.40" font-family='"Liberation Sans", sans-serif' font-size="9.89" font-weight="normal" font-style="normal" fill="#1a1a1a" stroke="#1a1a1a" stroke-width="0.1" textLength="12.99" lengthAdjust="spacingAndGlyphs" >4.5</text>
<text x="136.67" y="289.40" font-family='"Liberation Sans", sans-serif' font-size="10.18" font-weight="bold" font-style="normal" fill="#1a1a1a" stroke="#1a1a1a" stroke-width="0.3" textLength="98.83" lengthAdjust="spacingAndGlyphs" >JUMLAH PENERIMAAN</text>
<text x="133.47" y="596.10" font-family='"Liberation Sans", sans-serif' font-size="10.18" font-weight="bold" font-style="normal" fill="#1a1a1a" stroke="#1a1a1a" stroke-width="0.3" textLength="105.41" lengthAdjust="spacingAndGlyphs" >JUMLAH PENGELUARAN</text>
<text x="156.43" y="610.80" font-family='"Liberation Sans", sans-serif' font-size="10.18" font-weight="bold" font-style="normal" fill="#1a1a1a" stroke="#1a1a1a" stroke-width="0.3" textLength="59.00" lengthAdjust="spacingAndGlyphs" >SALDO DANA</text>
<text x="311.47" y="261.90" font-family='"Liberation Sans", sans-serif' font-size="9.89" font-weight="normal" font-style="normal" fill="#1a1a1a" stroke="#1a1a1a" stroke-width="0.1" textLength="12.84" lengthAdjust="spacingAndGlyphs" >Rp</text>
<text x="347.79" y="261.90" font-family='"Liberation Sans", sans-serif' font-size="9.89" font-weight="normal" font-style="normal" fill="#1a1a1a" stroke="#1a1a1a" stroke-width="0.1" textLength="51.97" lengthAdjust="spacingAndGlyphs" >500.000.000</text>
<text x="411.37" y="261.90" font-family='"Liberation Sans", sans-serif' font-size="9.89" font-weight="normal" font-style="normal" fill="#1a1a1a" stroke="#1a1a1a" stroke-width="0.1" textLength="12.84" lengthAdjust="spacingAndGlyphs" >Rp</text>
<text x="447.56" y="261.90" font-family='"Liberation Sans", sans-serif' font-size="9.89" font-weight="normal" font-style="normal" fill="#1a1a1a" stroke="#1a1a1a" stroke-width="0.1" textLength="52.31" lengthAdjust="spacingAndGlyphs" >150.000.000</text>
<text x="511.97" y="261.90" font-family='"Liberation Sans", sans-serif' font-size="9.89" font-weight="normal" font-style="normal" fill="#1a1a1a" stroke="#1a1a1a" stroke-width="0.1" textLength="12.84" lengthAdjust="spacingAndGlyphs" >Rp</text>
<text x="549.21" y="261.90" font-family='"Liberation Sans", sans-serif' font-size="9.89" font-weight="normal" font-style="normal" fill="#1a1a1a" stroke="#1a1a1a" stroke-width="0.1" textLength="51.95" lengthAdjust="spacingAndGlyphs" >350.000.000</text>
<text x="310.84" y="289.40" font-family='"Liberation Sans", sans-serif' font-size="9.89" font-weight="bold" font-style="normal" fill="#1a1a1a" stroke="#1a1a1a" stroke-width="0.3" textLength="13.06" lengthAdjust="spacingAndGlyphs" >Rp</text>
<text x="347.88" y="289.40" font-family='"Liberation Sans", sans-serif' font-size="9.89" font-weight="bold" font-style="normal" fill="#1a1a1a" stroke="#1a1a1a" stroke-width="0.3" textLength="51.90" lengthAdjust="spacingAndGlyphs" >500.000.000</text>
<text x="410.74" y="289.40" font-family='"Liberation Sans", sans-serif' font-size="9.89" font-weight="bold" font-style="normal" fill="#1a1a1a" stroke="#1a1a1a" stroke-width="0.3" textLength="13.06" lengthAdjust="spacingAndGlyphs" >Rp</text>
<text x="447.68" y="289.40" font-family='"Liberation Sans", sans-serif' font-size="9.89" font-weight="bold" font-style="normal" fill="#1a1a1a" stroke="#1a1a1a" stroke-width="0.3" textLength="52.21" lengthAdjust="spacingAndGlyphs" >150.000.000</text>
<text x="511.34" y="289.40" font-family='"Liberation Sans", sans-serif' font-size="9.89" font-weight="bold" font-style="normal" fill="#1a1a1a" stroke="#1a1a1a" stroke-width="0.3" textLength="13.06" lengthAdjust="spacingAndGlyphs" >Rp</text>
<text x="549.35" y="289.40" font-family='"Liberation Sans", sans-serif' font-size="9.89" font-weight="bold" font-style="normal" fill="#1a1a1a" stroke="#1a1a1a" stroke-width="0.3" textLength="51.83" lengthAdjust="spacingAndGlyphs" >350.000.000</text>
<text x="311.47" y="345.20" font-family='"Liberation Sans", sans-serif' font-size="9.89" font-weight="normal" font-style="normal" fill="#1a1a1a" stroke="#1a1a1a" stroke-width="0.1" textLength="12.84" lengthAdjust="spacingAndGlyphs" >Rp</text>
<text x="352.90" y="345.20" font-family='"Liberation Sans", sans-serif' font-size="9.89" font-weight="normal" font-style="normal" fill="#1a1a1a" stroke="#1a1a1a" stroke-width="0.1" textLength="46.85" lengthAdjust="spacingAndGlyphs" >25.000.000</text>
<text x="411.37" y="345.20" font-family='"Liberation Sans", sans-serif' font-size="9.89" font-weight="normal" font-style="normal" fill="#1a1a1a" stroke="#1a1a1a" stroke-width="0.1" textLength="12.84" lengthAdjust="spacingAndGlyphs" >Rp</text>
<text x="466.00" y="345.20" font-family='"Liberation Sans", sans-serif' font-size="9.89" font-weight="normal" font-style="normal" fill="#1a1a1a" stroke="#1a1a1a" stroke-width="0.1" textLength="33.87" lengthAdjust="spacingAndGlyphs" >700.000</text>
<text x="511.97" y="345.20" font-family='"Liberation Sans", sans-serif' font-size="9.89" font-weight="normal" font-style="normal" fill="#1a1a1a" stroke="#1a1a1a" stroke-width="0.1" textLength="12.84" lengthAdjust="spacingAndGlyphs" >Rp</text>
<text x="554.30" y="345.20" font-family='"Liberation Sans", sans-serif' font-size="9.89" font-weight="normal" font-style="normal" fill="#1a1a1a" stroke="#1a1a1a" stroke-width="0.1" textLength="46.85" lengthAdjust="spacingAndGlyphs" >24.300.000</text>
<text x="311.47" y="358.90" font-family='"Liberation Sans", sans-serif' font-size="9.89" font-weight="normal" font-style="normal" fill="#1a1a1a" stroke="#1a1a1a" stroke-width="0.1" textLength="12.84" lengthAdjust="spacingAndGlyphs" >Rp</text>
<text x="358.20" y="358.90" font-family='"Liberation Sans", sans-serif' font-size="9.89" font-weight="normal" font-style="normal" fill="#1a1a1a" stroke="#1a1a1a" stroke-width="0.1" textLength="41.56" lengthAdjust="spacingAndGlyphs" >5.000.000</text>
<text x="411.37" y="358.90" font-family='"Liberation Sans", sans-serif' font-size="9.89" font-weight="normal" font-style="normal" fill="#1a1a1a" stroke="#1a1a1a" stroke-width="0.1" textLength="12.84" lengthAdjust="spacingAndGlyphs" >Rp</text>
<text x="457.97" y="358.90" font-family='"Liberation Sans", sans-serif' font-size="9.89" font-weight="normal" font-style="normal" fill="#1a1a1a" stroke="#1a1a1a" stroke-width="0.1" textLength="41.90" lengthAdjust="spacingAndGlyphs" >1.640.000</text>
<text x="511.97" y="358.90" font-family='"Liberation Sans", sans-serif' font-size="9.89" font-weight="normal" font-style="normal" fill="#1a1a1a" stroke="#1a1a1a" stroke-width="0.1" textLength="12.84" lengthAdjust="spacingAndGlyphs" >Rp</text>
<text x="559.63" y="358.90" font-family='"Liberation Sans", sans-serif' font-size="9.89" font-weight="normal" font-style="normal" fill="#1a1a1a" stroke="#1a1a1a" stroke-width="0.1" textLength="41.54" lengthAdjust="spacingAndGlyphs" >3.360.000</text>
<text x="311.47" y="372.80" font-family='"Liberation Sans", sans-serif' font-size="9.89" font-weight="normal" font-style="normal" fill="#1a1a1a" stroke="#1a1a1a" stroke-width="0.1" textLength="12.84" lengthAdjust="spacingAndGlyphs" >Rp</text>
<text x="358.11" y="372.80" font-family='"Liberation Sans", sans-serif' font-size="9.89" font-weight="normal" font-style="normal" fill="#1a1a1a" stroke="#1a1a1a" stroke-width="0.1" textLength="41.66" lengthAdjust="spacingAndGlyphs" >2.500.000</text>
<text x="411.37" y="372.80" font-family='"Liberation Sans", sans-serif' font-size="9.89" font-weight="normal" font-style="normal" fill="#1a1a1a" stroke="#1a1a1a" stroke-width="0.1" textLength="12.84" lengthAdjust="spacingAndGlyphs" >Rp</text>
<rect x="496.50" y="369.20" width="3.0" height="1.0" fill="#1a1a1a"/>
<text x="511.97" y="372.80" font-family='"Liberation Sans", sans-serif' font-size="9.89" font-weight="normal" font-style="normal" fill="#1a1a1a" stroke="#1a1a1a" stroke-width="0.1" textLength="12.84" lengthAdjust="spacingAndGlyphs" >Rp</text>
<text x="559.51" y="372.80" font-family='"Liberation Sans", sans-serif' font-size="9.89" font-weight="normal" font-style="normal" fill="#1a1a1a" stroke="#1a1a1a" stroke-width="0.1" textLength="41.66" lengthAdjust="spacingAndGlyphs" >2.500.000</text>
<text x="311.47" y="406.50" font-family='"Liberation Sans", sans-serif' font-size="9.89" font-weight="normal" font-style="normal" fill="#1a1a1a" stroke="#1a1a1a" stroke-width="0.1" textLength="12.84" lengthAdjust="spacingAndGlyphs" >Rp</text>
<text x="352.90" y="406.50" font-family='"Liberation Sans", sans-serif' font-size="9.89" font-weight="normal" font-style="normal" fill="#1a1a1a" stroke="#1a1a1a" stroke-width="0.1" textLength="46.85" lengthAdjust="spacingAndGlyphs" >20.000.000</text>
<text x="411.37" y="406.50" font-family='"Liberation Sans", sans-serif' font-size="9.89" font-weight="normal" font-style="normal" fill="#1a1a1a" stroke="#1a1a1a" stroke-width="0.1" textLength="12.84" lengthAdjust="spacingAndGlyphs" >Rp</text>
<text x="457.97" y="406.50" font-family='"Liberation Sans", sans-serif' font-size="9.89" font-weight="normal" font-style="normal" fill="#1a1a1a" stroke="#1a1a1a" stroke-width="0.1" textLength="41.90" lengthAdjust="spacingAndGlyphs" >1.000.000</text>
<text x="511.97" y="406.50" font-family='"Liberation Sans", sans-serif' font-size="9.89" font-weight="normal" font-style="normal" fill="#1a1a1a" stroke="#1a1a1a" stroke-width="0.1" textLength="12.84" lengthAdjust="spacingAndGlyphs" >Rp</text>
<text x="554.06" y="406.50" font-family='"Liberation Sans", sans-serif' font-size="9.89" font-weight="normal" font-style="normal" fill="#1a1a1a" stroke="#1a1a1a" stroke-width="0.1" textLength="47.09" lengthAdjust="spacingAndGlyphs" >19.000.000</text>
<text x="311.47" y="420.40" font-family='"Liberation Sans", sans-serif' font-size="9.89" font-weight="normal" font-style="normal" fill="#1a1a1a" stroke="#1a1a1a" stroke-width="0.1" textLength="12.84" lengthAdjust="spacingAndGlyphs" >Rp</text>
<text x="352.90" y="420.40" font-family='"Liberation Sans", sans-serif' font-size="9.89" font-weight="normal" font-style="normal" fill="#1a1a1a" stroke="#1a1a1a" stroke-width="0.1" textLength="46.85" lengthAdjust="spacingAndGlyphs" >26.000.000</text>
<text x="411.37" y="420.40" font-family='"Liberation Sans", sans-serif' font-size="9.89" font-weight="normal" font-style="normal" fill="#1a1a1a" stroke="#1a1a1a" stroke-width="0.1" textLength="12.84" lengthAdjust="spacingAndGlyphs" >Rp</text>
<text x="466.00" y="420.40" font-family='"Liberation Sans", sans-serif' font-size="9.89" font-weight="normal" font-style="normal" fill="#1a1a1a" stroke="#1a1a1a" stroke-width="0.1" textLength="33.87" lengthAdjust="spacingAndGlyphs" >750.000</text>
<text x="511.97" y="420.40" font-family='"Liberation Sans", sans-serif' font-size="9.89" font-weight="normal" font-style="normal" fill="#1a1a1a" stroke="#1a1a1a" stroke-width="0.1" textLength="12.84" lengthAdjust="spacingAndGlyphs" >Rp</text>
<text x="554.30" y="420.40" font-family='"Liberation Sans", sans-serif' font-size="9.89" font-weight="normal" font-style="normal" fill="#1a1a1a" stroke="#1a1a1a" stroke-width="0.1" textLength="46.85" lengthAdjust="spacingAndGlyphs" >25.250.000</text>
<text x="311.47" y="434.30" font-family='"Liberation Sans", sans-serif' font-size="9.89" font-weight="normal" font-style="normal" fill="#1a1a1a" stroke="#1a1a1a" stroke-width="0.1" textLength="12.84" lengthAdjust="spacingAndGlyphs" >Rp</text>
<text x="352.66" y="434.30" font-family='"Liberation Sans", sans-serif' font-size="9.89" font-weight="normal" font-style="normal" fill="#1a1a1a" stroke="#1a1a1a" stroke-width="0.1" textLength="47.09" lengthAdjust="spacingAndGlyphs" >10.000.000</text>
<text x="411.37" y="434.30" font-family='"Liberation Sans", sans-serif' font-size="9.89" font-weight="normal" font-style="normal" fill="#1a1a1a" stroke="#1a1a1a" stroke-width="0.1" textLength="12.84" lengthAdjust="spacingAndGlyphs" >Rp</text>
<text x="466.12" y="434.30" font-family='"Liberation Sans", sans-serif' font-size="9.89" font-weight="normal" font-style="normal" fill="#1a1a1a" stroke="#1a1a1a" stroke-width="0.1" textLength="33.75" lengthAdjust="spacingAndGlyphs" >300.000</text>
<text x="511.97" y="434.30" font-family='"Liberation Sans", sans-serif' font-size="9.89" font-weight="normal" font-style="normal" fill="#1a1a1a" stroke="#1a1a1a" stroke-width="0.1" textLength="12.84" lengthAdjust="spacingAndGlyphs" >Rp</text>
<text x="559.53" y="434.30" font-family='"Liberation Sans", sans-serif' font-size="9.89" font-weight="normal" font-style="normal" fill="#1a1a1a" stroke="#1a1a1a" stroke-width="0.1" textLength="41.63" lengthAdjust="spacingAndGlyphs" >9.700.000</text>
<text x="311.47" y="466.60" font-family='"Liberation Sans", sans-serif' font-size="9.89" font-weight="normal" font-style="normal" fill="#1a1a1a" stroke="#1a1a1a" stroke-width="0.1" textLength="12.84" lengthAdjust="spacingAndGlyphs" >Rp</text>
<text x="352.66" y="466.60" font-family='"Liberation Sans", sans-serif' font-size="9.89" font-weight="normal" font-style="normal" fill="#1a1a1a" stroke="#1a1a1a" stroke-width="0.1" textLength="47.09" lengthAdjust="spacingAndGlyphs" >10.000.000</text>
<text x="411.37" y="466.60" font-family='"Liberation Sans", sans-serif' font-size="9.89" font-weight="normal" font-style="normal" fill="#1a1a1a" stroke="#1a1a1a" stroke-width="0.1" textLength="12.84" lengthAdjust="spacingAndGlyphs" >Rp</text>
<text x="457.97" y="466.60" font-family='"Liberation Sans", sans-serif' font-size="9.89" font-weight="normal" font-style="normal" fill="#1a1a1a" stroke="#1a1a1a" stroke-width="0.1" textLength="41.90" lengthAdjust="spacingAndGlyphs" >1.000.000</text>
<text x="511.97" y="466.60" font-family='"Liberation Sans", sans-serif' font-size="9.89" font-weight="normal" font-style="normal" fill="#1a1a1a" stroke="#1a1a1a" stroke-width="0.1" textLength="12.84" lengthAdjust="spacingAndGlyphs" >Rp</text>
<text x="559.53" y="466.60" font-family='"Liberation Sans", sans-serif' font-size="9.89" font-weight="normal" font-style="normal" fill="#1a1a1a" stroke="#1a1a1a" stroke-width="0.1" textLength="41.63" lengthAdjust="spacingAndGlyphs" >9.000.000</text>
<text x="311.47" y="480.50" font-family='"Liberation Sans", sans-serif' font-size="9.89" font-weight="normal" font-style="normal" fill="#1a1a1a" stroke="#1a1a1a" stroke-width="0.1" textLength="12.84" lengthAdjust="spacingAndGlyphs" >Rp</text>
<text x="353.00" y="480.50" font-family='"Liberation Sans", sans-serif' font-size="9.89" font-weight="normal" font-style="normal" fill="#1a1a1a" stroke="#1a1a1a" stroke-width="0.1" textLength="46.76" lengthAdjust="spacingAndGlyphs" >50.000.000</text>
<text x="411.37" y="480.50" font-family='"Liberation Sans", sans-serif' font-size="9.89" font-weight="normal" font-style="normal" fill="#1a1a1a" stroke="#1a1a1a" stroke-width="0.1" textLength="12.84" lengthAdjust="spacingAndGlyphs" >Rp</text>
<rect x="496.50" y="476.90" width="3.0" height="1.0" fill="#1a1a1a"/>
<text x="511.97" y="480.50" font-family='"Liberation Sans", sans-serif' font-size="9.89" font-weight="normal" font-style="normal" fill="#1a1a1a" stroke="#1a1a1a" stroke-width="0.1" textLength="12.84" lengthAdjust="spacingAndGlyphs" >Rp</text>
<text x="554.40" y="480.50" font-family='"Liberation Sans", sans-serif' font-size="9.89" font-weight="normal" font-style="normal" fill="#1a1a1a" stroke="#1a1a1a" stroke-width="0.1" textLength="46.76" lengthAdjust="spacingAndGlyphs" >50.000.000</text>
<text x="311.47" y="494.30" font-family='"Liberation Sans", sans-serif' font-size="9.89" font-weight="normal" font-style="normal" fill="#1a1a1a" stroke="#1a1a1a" stroke-width="0.1" textLength="12.84" lengthAdjust="spacingAndGlyphs" >Rp</text>
<text x="358.37" y="494.30" font-family='"Liberation Sans", sans-serif' font-size="9.89" font-weight="normal" font-style="normal" fill="#1a1a1a" stroke="#1a1a1a" stroke-width="0.1" textLength="41.40" lengthAdjust="spacingAndGlyphs" >4.500.000</text>
<text x="411.37" y="494.30" font-family='"Liberation Sans", sans-serif' font-size="9.89" font-weight="normal" font-style="normal" fill="#1a1a1a" stroke="#1a1a1a" stroke-width="0.1" textLength="12.84" lengthAdjust="spacingAndGlyphs" >Rp</text>
<rect x="496.50" y="490.70" width="3.0" height="1.0" fill="#1a1a1a"/>
<text x="511.97" y="494.30" font-family='"Liberation Sans", sans-serif' font-size="9.89" font-weight="normal" font-style="normal" fill="#1a1a1a" stroke="#1a1a1a" stroke-width="0.1" textLength="12.84" lengthAdjust="spacingAndGlyphs" >Rp</text>
<text x="559.77" y="494.30" font-family='"Liberation Sans", sans-serif' font-size="9.89" font-weight="normal" font-style="normal" fill="#1a1a1a" stroke="#1a1a1a" stroke-width="0.1" textLength="41.40" lengthAdjust="spacingAndGlyphs" >4.500.000</text>
<text x="311.47" y="527.40" font-family='"Liberation Sans", sans-serif' font-size="9.89" font-weight="normal" font-style="normal" fill="#1a1a1a" stroke="#1a1a1a" stroke-width="0.1" textLength="12.84" lengthAdjust="spacingAndGlyphs" >Rp</text>
<text x="347.69" y="527.40" font-family='"Liberation Sans", sans-serif' font-size="9.89" font-weight="normal" font-style="normal" fill="#1a1a1a" stroke="#1a1a1a" stroke-width="0.1" textLength="52.07" lengthAdjust="spacingAndGlyphs" >200.000.000</text>
<text x="411.37" y="527.40" font-family='"Liberation Sans", sans-serif' font-size="9.89" font-weight="normal" font-style="normal" fill="#1a1a1a" stroke="#1a1a1a" stroke-width="0.1" textLength="12.84" lengthAdjust="spacingAndGlyphs" >Rp</text>
<text x="458.30" y="527.40" font-family='"Liberation Sans", sans-serif' font-size="9.89" font-weight="normal" font-style="normal" fill="#1a1a1a" stroke="#1a1a1a" stroke-width="0.1" textLength="41.56" lengthAdjust="spacingAndGlyphs" >5.000.000</text>
<text x="511.97" y="527.40" font-family='"Liberation Sans", sans-serif' font-size="9.89" font-weight="normal" font-style="normal" fill="#1a1a1a" stroke="#1a1a1a" stroke-width="0.1" textLength="12.84" lengthAdjust="spacingAndGlyphs" >Rp</text>
<text x="548.86" y="527.40" font-family='"Liberation Sans", sans-serif' font-size="9.89" font-weight="normal" font-style="normal" fill="#1a1a1a" stroke="#1a1a1a" stroke-width="0.1" textLength="52.31" lengthAdjust="spacingAndGlyphs" >195.000.000</text>
<text x="311.47" y="541.20" font-family='"Liberation Sans", sans-serif' font-size="9.89" font-weight="normal" font-style="normal" fill="#1a1a1a" stroke="#1a1a1a" stroke-width="0.1" textLength="12.84" lengthAdjust="spacingAndGlyphs" >Rp</text>
<text x="352.90" y="541.20" font-family='"Liberation Sans", sans-serif' font-size="9.89" font-weight="normal" font-style="normal" fill="#1a1a1a" stroke="#1a1a1a" stroke-width="0.1" textLength="46.85" lengthAdjust="spacingAndGlyphs" >75.000.000</text>
<text x="411.37" y="541.20" font-family='"Liberation Sans", sans-serif' font-size="9.89" font-weight="normal" font-style="normal" fill="#1a1a1a" stroke="#1a1a1a" stroke-width="0.1" textLength="12.84" lengthAdjust="spacingAndGlyphs" >Rp</text>
<text x="458.21" y="541.20" font-family='"Liberation Sans", sans-serif' font-size="9.89" font-weight="normal" font-style="normal" fill="#1a1a1a" stroke="#1a1a1a" stroke-width="0.1" textLength="41.66" lengthAdjust="spacingAndGlyphs" >2.000.000</text>
<text x="511.97" y="541.20" font-family='"Liberation Sans", sans-serif' font-size="9.89" font-weight="normal" font-style="normal" fill="#1a1a1a" stroke="#1a1a1a" stroke-width="0.1" textLength="12.84" lengthAdjust="spacingAndGlyphs" >Rp</text>
<text x="554.30" y="541.20" font-family='"Liberation Sans", sans-serif' font-size="9.89" font-weight="normal" font-style="normal" fill="#1a1a1a" stroke="#1a1a1a" stroke-width="0.1" textLength="46.85" lengthAdjust="spacingAndGlyphs" >73.000.000</text>
<text x="311.47" y="555.10" font-family='"Liberation Sans", sans-serif' font-size="9.89" font-weight="normal" font-style="normal" fill="#1a1a1a" stroke="#1a1a1a" stroke-width="0.1" textLength="12.84" lengthAdjust="spacingAndGlyphs" >Rp</text>
<text x="352.90" y="555.10" font-family='"Liberation Sans", sans-serif' font-size="9.89" font-weight="normal" font-style="normal" fill="#1a1a1a" stroke="#1a1a1a" stroke-width="0.1" textLength="46.85" lengthAdjust="spacingAndGlyphs" >20.000.000</text>
<text x="411.37" y="555.10" font-family='"Liberation Sans", sans-serif' font-size="9.89" font-weight="normal" font-style="normal" fill="#1a1a1a" stroke="#1a1a1a" stroke-width="0.1" textLength="12.84" lengthAdjust="spacingAndGlyphs" >Rp</text>
<text x="471.21" y="555.10" font-family='"Liberation Sans", sans-serif' font-size="9.89" font-weight="normal" font-style="normal" fill="#1a1a1a" stroke="#1a1a1a" stroke-width="0.1" textLength="28.65" lengthAdjust="spacingAndGlyphs" >28.000</text>
<text x="511.97" y="555.10" font-family='"Liberation Sans", sans-serif' font-size="9.89" font-weight="normal" font-style="normal" fill="#1a1a1a" stroke="#1a1a1a" stroke-width="0.1" textLength="12.84" lengthAdjust="spacingAndGlyphs" >Rp</text>
<text x="554.06" y="555.10" font-family='"Liberation Sans", sans-serif' font-size="9.89" font-weight="normal" font-style="normal" fill="#1a1a1a" stroke="#1a1a1a" stroke-width="0.1" textLength="47.09" lengthAdjust="spacingAndGlyphs" >19.972.000</text>
<text x="311.47" y="568.80" font-family='"Liberation Sans", sans-serif' font-size="9.89" font-weight="normal" font-style="normal" fill="#1a1a1a" stroke="#1a1a1a" stroke-width="0.1" textLength="12.84" lengthAdjust="spacingAndGlyphs" >Rp</text>
<text x="352.66" y="568.80" font-family='"Liberation Sans", sans-serif' font-size="9.89" font-weight="normal" font-style="normal" fill="#1a1a1a" stroke="#1a1a1a" stroke-width="0.1" textLength="47.09" lengthAdjust="spacingAndGlyphs" >12.000.000</text>
<text x="411.37" y="568.80" font-family='"Liberation Sans", sans-serif' font-size="9.89" font-weight="normal" font-style="normal" fill="#1a1a1a" stroke="#1a1a1a" stroke-width="0.1" textLength="12.84" lengthAdjust="spacingAndGlyphs" >Rp</text>
<text x="466.00" y="568.80" font-family='"Liberation Sans", sans-serif' font-size="9.89" font-weight="normal" font-style="normal" fill="#1a1a1a" stroke="#1a1a1a" stroke-width="0.1" textLength="33.87" lengthAdjust="spacingAndGlyphs" >200.000</text>
<text x="511.97" y="568.80" font-family='"Liberation Sans", sans-serif' font-size="9.89" font-weight="normal" font-style="normal" fill="#1a1a1a" stroke="#1a1a1a" stroke-width="0.1" textLength="12.84" lengthAdjust="spacingAndGlyphs" >Rp</text>
<text x="554.05" y="568.80" font-family='"Liberation Sans", sans-serif' font-size="9.89" font-weight="normal" font-style="normal" fill="#1a1a1a" stroke="#1a1a1a" stroke-width="0.1" textLength="47.11" lengthAdjust="spacingAndGlyphs" >11.800.000</text>
<text x="311.47" y="582.40" font-family='"Liberation Sans", sans-serif' font-size="9.89" font-weight="normal" font-style="normal" fill="#1a1a1a" stroke="#1a1a1a" stroke-width="0.1" textLength="12.84" lengthAdjust="spacingAndGlyphs" >Rp</text>
<text x="353.16" y="582.40" font-family='"Liberation Sans", sans-serif' font-size="9.89" font-weight="normal" font-style="normal" fill="#1a1a1a" stroke="#1a1a1a" stroke-width="0.1" textLength="46.59" lengthAdjust="spacingAndGlyphs" >40.000.000</text>
<text x="411.37" y="582.40" font-family='"Liberation Sans", sans-serif' font-size="9.89" font-weight="normal" font-style="normal" fill="#1a1a1a" stroke="#1a1a1a" stroke-width="0.1" textLength="12.84" lengthAdjust="spacingAndGlyphs" >Rp</text>
<rect x="496.50" y="578.80" width="3.0" height="1.0" fill="#1a1a1a"/>
<text x="511.97" y="582.40" font-family='"Liberation Sans", sans-serif' font-size="9.89" font-weight="normal" font-style="normal" fill="#1a1a1a" stroke="#1a1a1a" stroke-width="0.1" textLength="12.84" lengthAdjust="spacingAndGlyphs" >Rp</text>
<text x="554.56" y="582.40" font-family='"Liberation Sans", sans-serif' font-size="9.89" font-weight="normal" font-style="normal" fill="#1a1a1a" stroke="#1a1a1a" stroke-width="0.1" textLength="46.59" lengthAdjust="spacingAndGlyphs" >40.000.000</text>
<text x="310.84" y="596.10" font-family='"Liberation Sans", sans-serif' font-size="9.89" font-weight="bold" font-style="normal" fill="#1a1a1a" stroke="#1a1a1a" stroke-width="0.3" textLength="13.06" lengthAdjust="spacingAndGlyphs" >Rp</text>
<text x="347.88" y="596.10" font-family='"Liberation Sans", sans-serif' font-size="9.89" font-weight="bold" font-style="normal" fill="#1a1a1a" stroke="#1a1a1a" stroke-width="0.3" textLength="51.90" lengthAdjust="spacingAndGlyphs" >500.000.000</text>
<text x="410.74" y="596.10" font-family='"Liberation Sans", sans-serif' font-size="9.89" font-weight="bold" font-style="normal" fill="#1a1a1a" stroke="#1a1a1a" stroke-width="0.3" textLength="13.06" lengthAdjust="spacingAndGlyphs" >Rp</text>
<text x="452.88" y="596.10" font-family='"Liberation Sans", sans-serif' font-size="9.89" font-weight="bold" font-style="normal" fill="#1a1a1a" stroke="#1a1a1a" stroke-width="0.3" textLength="46.99" lengthAdjust="spacingAndGlyphs" >12.618.000</text>
<text x="511.34" y="596.10" font-family='"Liberation Sans", sans-serif' font-size="9.89" font-weight="bold" font-style="normal" fill="#1a1a1a" stroke="#1a1a1a" stroke-width="0.3" textLength="13.06" lengthAdjust="spacingAndGlyphs" >Rp</text>
<text x="549.42" y="596.10" font-family='"Liberation Sans", sans-serif' font-size="9.89" font-weight="bold" font-style="normal" fill="#1a1a1a" stroke="#1a1a1a" stroke-width="0.3" textLength="51.76" lengthAdjust="spacingAndGlyphs" >487.382.000</text>
<text x="410.24" y="610.70" font-family='"Liberation Sans", sans-serif' font-size="9.89" font-weight="bold" font-style="normal" fill="#1a1a1a" stroke="#1a1a1a" stroke-width="0.3" textLength="13.06" lengthAdjust="spacingAndGlyphs" >Rp</text>
<text x="447.88" y="610.70" font-family='"Liberation Sans", sans-serif' font-size="9.89" font-weight="bold" font-style="normal" fill="#1a1a1a" stroke="#1a1a1a" stroke-width="0.3" textLength="52.21" lengthAdjust="spacingAndGlyphs" >137.382.000</text>
<rect x="405.00" y="598.90" width="100.60" height="14.90" fill="none" stroke="#217346" stroke-width="1.8"/>
<rect x="503.00" y="611.20" width="5" height="5" fill="#217346" stroke="#fff" stroke-width="0.8"/>
<rect x="0" y="622.0" width="618" height="24.0" fill="#e6e6e6" />
<rect x="0" y="621.5" width="618" height="1.2" fill="#c6c6c6" />
<rect x="0" y="645.8" width="618" height="1.0" fill="#c9c9c9" />
<path d="M27.2 630.4 V636.8 L23.0 633.6 Z" fill="#217346"/>
<path d="M48.6 630.4 V636.8 L52.8 633.6 Z" fill="#bdbdbd"/>
<rect x="69.7" y="635.3" width="2.0" height="2.0" fill="#217346" />
<rect x="73.6" y="635.3" width="2.0" height="2.0" fill="#217346" />
<rect x="77.5" y="635.3" width="2.0" height="2.0" fill="#217346" />
<rect x="86.60000000000001" y="625.2" width="1.2" height="17.0" fill="#ababab" />
<rect x="160.1" y="625.2" width="1.2" height="17.0" fill="#ababab" />
<rect x="292.2" y="625.2" width="1.2" height="17.0" fill="#ababab" />
<rect x="435.79999999999995" y="625.2" width="1.2" height="17.0" fill="#ababab" />
<rect x="546.1" y="625.2" width="1.2" height="17.0" fill="#ababab" />
<rect x="586.9" y="625.2" width="1.2" height="17.0" fill="#ababab" />
<text x="96.69" y="637.00" font-family='"Liberation Sans", sans-serif' font-size="10.04" font-weight="normal" font-style="normal" fill="#444444" stroke="#444444" stroke-width="0.1" textLength="53.11" lengthAdjust="spacingAndGlyphs" >NO_AKUN</text>
<text x="173.94" y="637.00" font-family='"Liberation Sans", sans-serif' font-size="10.04" font-weight="normal" font-style="normal" fill="#444444" stroke="#444444" stroke-width="0.1" textLength="105.80" lengthAdjust="spacingAndGlyphs" >JURNALPEMASUKAN</text>
<text x="305.55" y="637.00" font-family='"Liberation Sans", sans-serif' font-size="10.04" font-weight="normal" font-style="normal" fill="#444444" stroke="#444444" stroke-width="0.1" textLength="117.30" lengthAdjust="spacingAndGlyphs" >JURNALPENGELUARAN</text>
<text x="448.14" y="637.00" font-family='"Liberation Sans", sans-serif' font-size="10.04" font-weight="normal" font-style="normal" fill="#444444" stroke="#444444" stroke-width="0.1" textLength="86.34" lengthAdjust="spacingAndGlyphs" >JURNALNONKAS</text>
<text x="556.99" y="637.00" font-family='"Liberation Sans", sans-serif' font-size="10.04" font-weight="normal" font-style="normal" fill="#444444" stroke="#444444" stroke-width="0.1" textLength="18.53" lengthAdjust="spacingAndGlyphs" >LPK</text>
<text x="597.98" y="637.00" font-family='"Liberation Sans", sans-serif' font-size="10.04" font-weight="normal" font-style="normal" fill="#444444" stroke="#444444" stroke-width="0.1" textLength="12.15" lengthAdjust="spacingAndGlyphs" >LA</text>
<rect x="0" y="646.8" width="618" height="17.3" fill="#f0f0f0" />
<rect x="0" y="664.0" width="618" height="2.0" fill="#0a0a0a" />
<text x="5.82" y="658.90" font-family='"Liberation Sans", sans-serif' font-size="9.60" font-weight="normal" font-style="normal" fill="#505050" stroke="#505050" stroke-width="0.1" textLength="27.21" lengthAdjust="spacingAndGlyphs" >Ready</text>
</svg>
</body></html>
